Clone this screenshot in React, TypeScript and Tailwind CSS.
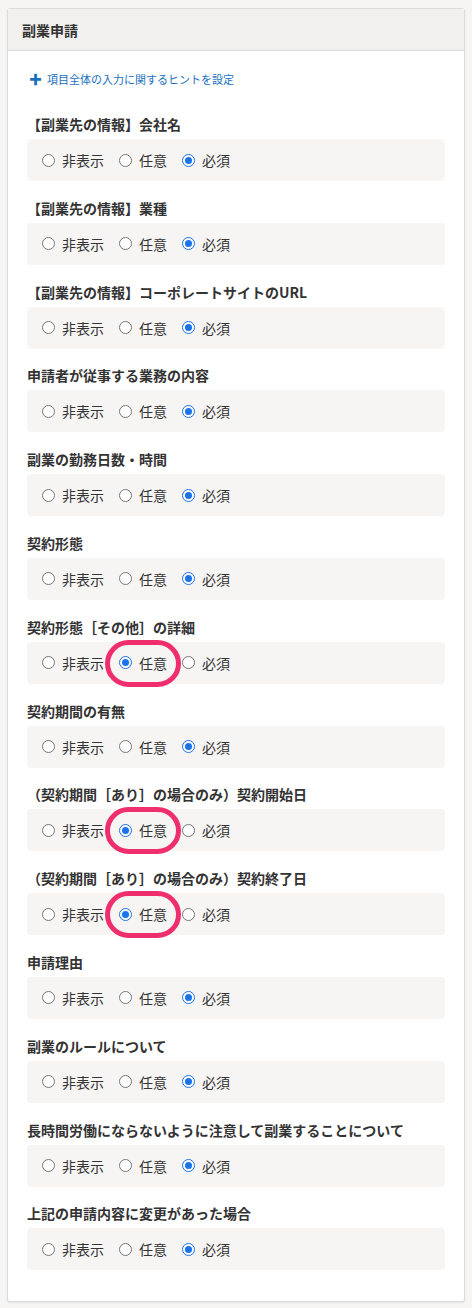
import React from "react";

type Level = "hidden" | "optional" | "required";

const items: { label: string; value: Level; mark?: boolean }[] = [
  { label: "【副業先の情報】会社名", value: "required" },
  { label: "【副業先の情報】業種", value: "required" },
  { label: "【副業先の情報】コーポレートサイトのURL", value: "required" },
  { label: "申請者が従事する業務の内容", value: "required" },
  { label: "副業の勤務日数・時間", value: "required" },
  { label: "契約形態", value: "required" },
  { label: "契約形態［その他］の詳細", value: "optional", mark: true },
  { label: "契約期間の有無", value: "required" },
  { label: "（契約期間［あり］の場合のみ）契約開始日", value: "optional", mark: true },
  { label: "（契約期間［あり］の場合のみ）契約終了日", value: "optional", mark: true },
  { label: "申請理由", value: "required" },
  { label: "副業のルールについて", value: "required" },
  { label: "長時間労働にならないように注意して副業することについて", value: "required" },
  { label: "上記の申請内容に変更があった場合", value: "required" },
];

const options: { key: Level; text: string }[] = [
  { key: "hidden", text: "非表示" },
  { key: "optional", text: "任意" },
  { key: "required", text: "必須" },
];

function Radio({ checked }: { checked: boolean }) {
  return checked ? (
    <span className="w-[13px] h-[13px] rounded-full border-[1.5px] border-[#1a73e8] bg-white flex items-center justify-center shrink-0">
      <span className="w-[7px] h-[7px] rounded-full bg-[#1a73e8]" />
    </span>
  ) : (
    <span className="w-[13px] h-[13px] rounded-full border border-[#767676] bg-white shrink-0" />
  );
}

export default function App() {
  return (
    <div
      className="min-h-[1308px] bg-[#f6f5f4] pt-2 px-[7px] pb-2 text-[#333]"
      style={{ fontFamily: '"Noto Sans CJK JP", "Noto Sans", sans-serif' }}
    >
      <div className="bg-white border border-[#dcdcdc] rounded-[3px] shadow-[0_1px_2px_rgba(0,0,0,0.08)]">
        <div className="h-[42px] bg-[#f1f0ee] border-b border-[#dcdcdc] flex items-center px-[14px]">
          <h2 className="text-[14px] font-bold leading-5">副業申請</h2>
        </div>
        <div className="px-[19px] pt-5 pb-[31px]">
          <div className="flex items-center gap-[5px] text-[11px] leading-4 text-[#1a6fc0] pl-[2px]">
            <span className="text-[13px] font-bold leading-4">✚</span>
            <span>項目全体の入力に関するヒントを設定</span>
          </div>
          <div className="mt-[27px]">
            {items.map((item, i) => (
              <div key={i} className={i === items.length - 1 ? "" : "mb-[16.8px]"}>
                <p className="text-[14px] font-bold leading-5">{item.label}</p>
                <div className="relative mt-[5px] h-[42px] rounded-[4px] bg-[#f6f5f4] flex items-center pl-[15px] text-[14px]">
                  {options.map((o) => (
                    <label key={o.key} className="flex items-center gap-[7px] mr-[15px]">
                      <Radio checked={item.value === o.key} />
                      <span className="leading-5">{o.text}</span>
                    </label>
                  ))}
                  {item.mark && (
                    <span className="absolute left-[78px] top-[-2px] w-[76px] h-[47px] rounded-full border-[5px] border-[#ef2f6d]" />
                  )}
                </div>
              </div>
            ))}
          </div>
        </div>
      </div>
    </div>
  );
}
